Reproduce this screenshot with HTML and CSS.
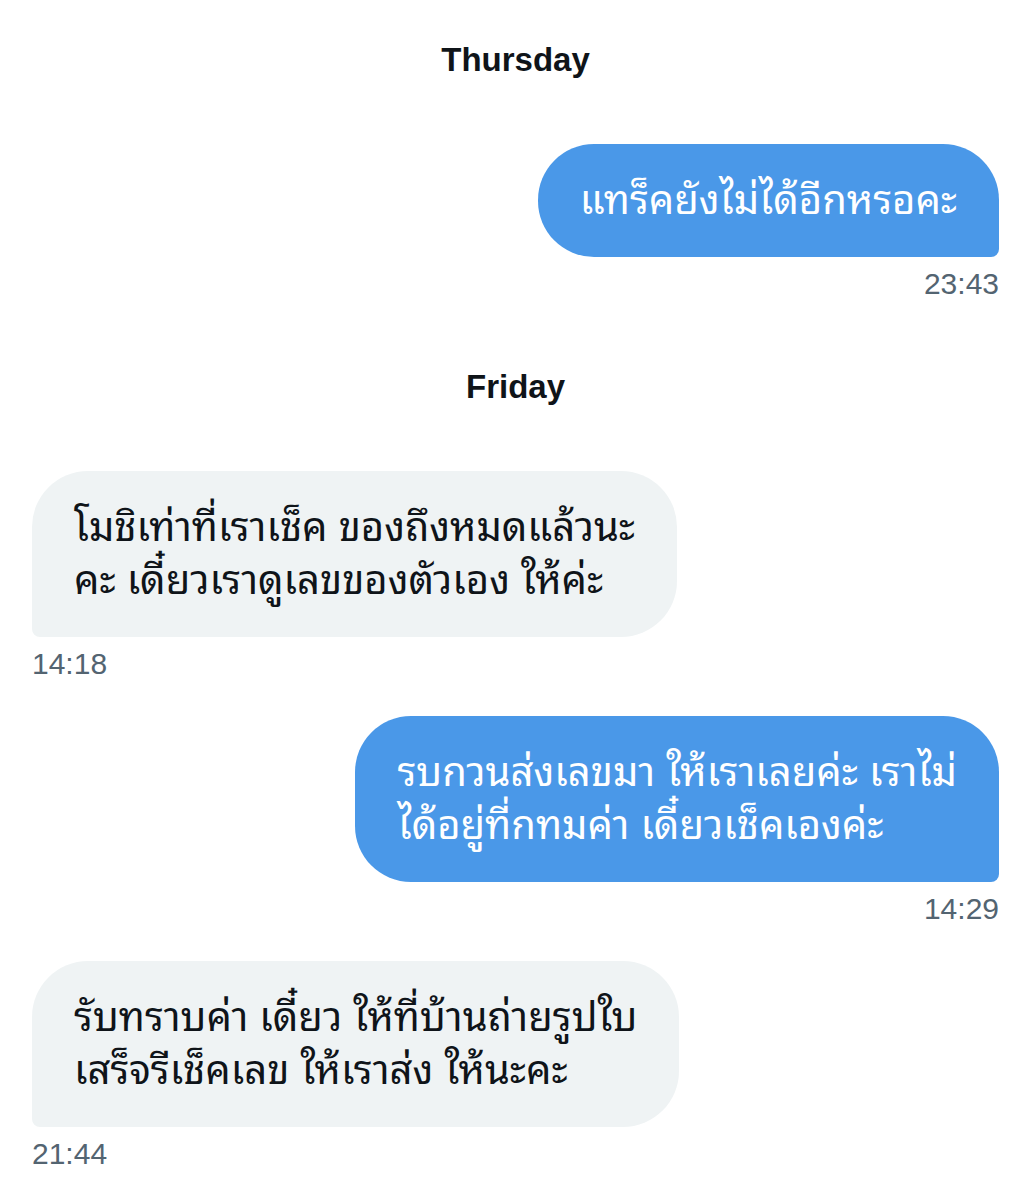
FILE: index.html
```html
<!DOCTYPE html>
<html lang="th">
<head>
<meta charset="utf-8">
<link rel="stylesheet" href="styles.css">
</head>
<body>
<main class="chat">
  <div class="day">Thursday</div>
  <div class="msg sent">
    <div class="bubble">แทร็คยังไม่ได้อีกหรอคะ</div>
    <div class="time">23:43</div>
  </div>

  <div class="day day-next">Friday</div>
  <div class="msg recv">
    <div class="bubble">โมชิเท่าที่เราเช็ค ของถึงหมดแล้วนะ<br>คะ เดี๋ยวเราดูเลขของตัวเอง ให้ค่ะ</div>
    <div class="time">14:18</div>
  </div>
  <div class="msg sent">
    <div class="bubble">รบกวนส่งเลขมา ให้เราเลยค่ะ เราไม่<br>ได้อยู่ที่กทมค่า เดี๋ยวเช็คเองค่ะ</div>
    <div class="time">14:29</div>
  </div>
  <div class="msg recv">
    <div class="bubble">รับทราบค่า เดี๋ยว ให้ที่บ้านถ่ายรูปใบ<br>เสร็จรีเช็คเลข ให้เราส่ง ให้นะคะ</div>
    <div class="time">21:44</div>
  </div>
</main>
</body>
</html>
```

FILE: styles.css
```css
* { box-sizing: border-box; }
html, body { margin: 0; padding: 0; background: #ffffff; }
body {
  font-family: "Liberation Sans", "Noto Sans Thai Looped", "Noto Sans Thai", "Noto Sans", sans-serif;
  color: #0f1419;
}
.chat {
  display: flex;
  flex-direction: column;
  padding: 40px 32px 0;
}
.day {
  text-align: center;
  font-weight: 700;
  font-size: 33px;
  line-height: 40px;
  margin-bottom: 64px;
}
.day-next { margin-top: 31px; }
.msg {
  display: flex;
  flex-direction: column;
  margin-bottom: 37px;
}
.msg.sent { align-items: flex-end; }
.msg.recv { align-items: flex-start; }
.bubble {
  padding: 30px 42px;
  font-size: 40px;
  line-height: 53px;
  white-space: nowrap;
  border-radius: 56px;
}
.sent .bubble {
  background: #4a98e8;
  color: #ffffff;
  border-bottom-right-radius: 8px;
}
.recv .bubble {
  background: #eff3f4;
  color: #0f1419;
  border-bottom-left-radius: 8px;
}
.time {
  margin-top: 12px;
  font-size: 30px;
  line-height: 30px;
  color: #536471;
}
```
